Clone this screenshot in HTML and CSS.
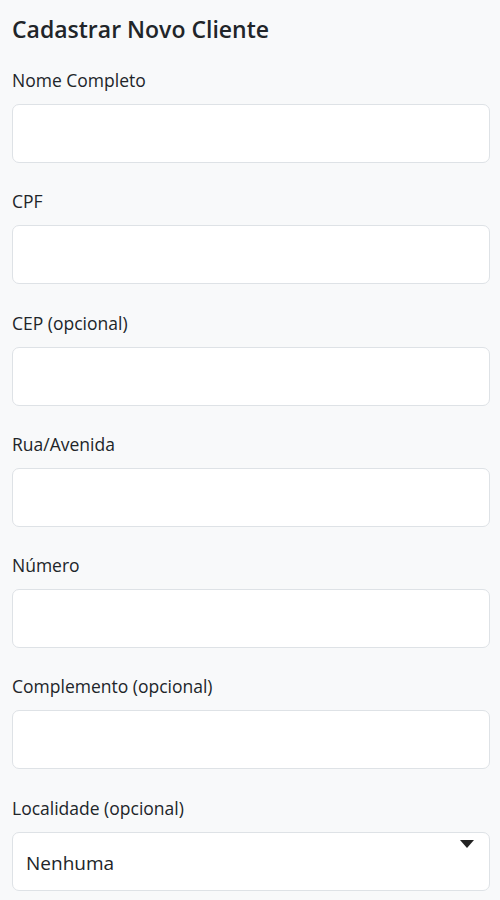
FILE: index.html
```html
<!DOCTYPE html>
<html lang="pt-BR">
<head>
  <meta charset="UTF-8">
  <title>Cadastrar Novo Cliente</title>
  <meta name="viewport" content="width=device-width, initial-scale=1.0">
  <link rel="stylesheet" href="styles.css">
</head>
<body>

  <!-- Formulário de cadastro -->
  <form class="form-cliente">
    <h2>Cadastrar Novo Cliente</h2>

    <div class="campo">
      <label for="nome">Nome Completo</label>
      <input type="text" id="nome">
    </div>

    <div class="campo">
      <label for="cpf">CPF</label>
      <input type="text" id="cpf">
    </div>

    <div class="campo">
      <label for="cep">CEP (opcional)</label>
      <input type="text" id="cep">
    </div>

    <div class="campo">
      <label for="rua">Rua/Avenida</label>
      <input type="text" id="rua">
    </div>

    <div class="campo">
      <label for="numero">Número</label>
      <input type="text" id="numero">
    </div>

    <div class="campo">
      <label for="complemento">Complemento (opcional)</label>
      <input type="text" id="complemento">
    </div>

    <div class="campo">
      <label for="localidade">Localidade (opcional)</label>
      <div class="select-box">
        <select id="localidade">
          <option>Nenhuma</option>
        </select>
        <span class="seta"></span>
      </div>
    </div>
  </form>

</body>
</html>
```

FILE: styles.css
```css
body {
  margin: 0;
  font-family: "Open Sans", Arial, sans-serif;
  background-color: #f8f9fa;
  color: #212529;
}

.form-cliente {
  padding: 14px 10px 0 12px;
  display: flex;
  flex-direction: column;
  gap: 26.3px;
}

.form-cliente h2 {
  font-size: 23px;
  font-weight: 600;
  line-height: 30px;
  margin: 0 0 -2.3px 0;
}

.campo {
  display: flex;
  flex-direction: column;
  gap: 12px;
}

.campo label {
  font-size: 17.5px;
  line-height: 24px;
}

.campo input,
.campo select {
  box-sizing: border-box;
  width: 100%;
  height: 59px;
  border: 1px solid #dee2e6;
  border-radius: 7px;
  background-color: #fff;
  font-family: inherit;
  font-size: 19px;
  color: #212529;
  padding: 0 13px;
  margin: 0;
  outline: none;
}

.select-box {
  position: relative;
}

.select-box select {
  appearance: none;
  -webkit-appearance: none;
  padding-top: 4px;
}

.seta {
  position: absolute;
  top: 8px;
  right: 16px;
  width: 0;
  height: 0;
  border-left: 7px solid transparent;
  border-right: 7px solid transparent;
  border-top: 8px solid #222;
  pointer-events: none;
}
```
